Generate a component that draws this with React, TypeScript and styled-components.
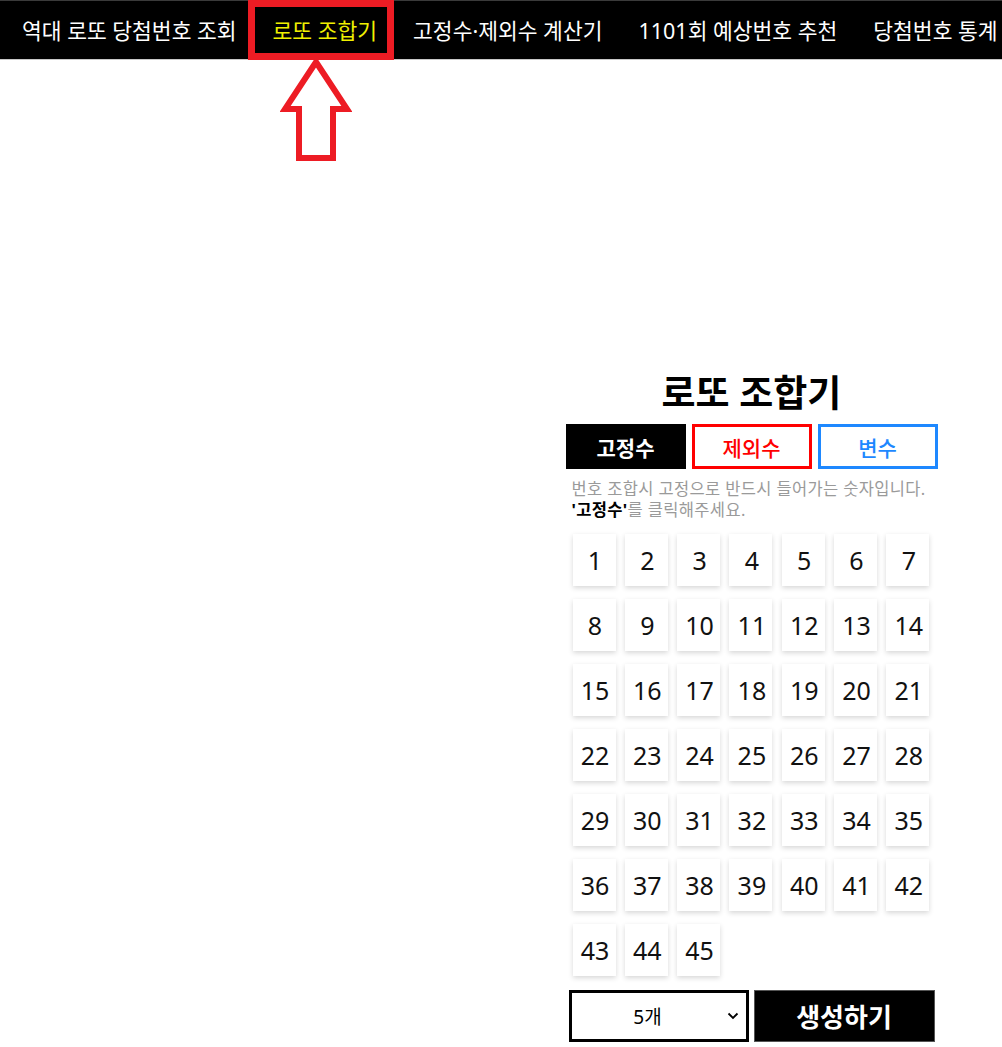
import React from "react";
import styled, { createGlobalStyle } from "styled-components";

const NAV_ITEMS = [
	"역대 로또 당첨번호 조회",
	"로또 조합기",
	"고정수·제외수 계산기",
	"1101회 예상번호 추천",
	"당첨번호 통계",
];

const NUMBERS = Array.from({ length: 45 }, (_, i) => i + 1);

type TabVariant = "fixed" | "exclude" | "variable";

const TAB_COLORS: Record<TabVariant, string> = {
	fixed: "#000000",
	exclude: "#ff0000",
	variable: "#1e88ff",
};

const GlobalStyle = createGlobalStyle`
	html, body {
		margin: 0;
		padding: 0;
		background: #ffffff;
	}
	body {
		font-family: "Noto Sans", "Noto Sans CJK KR", sans-serif;
		color: #000;
	}
	* {
		box-sizing: border-box;
	}
`;

const App = () => {
	return (
		<>
			<GlobalStyle />
			<NavBar>
				{NAV_ITEMS.map((item, i) => (
					<NavItem key={item} $active={i === 1}>
						{item}
						{i === 1 && (
							<PointerArrow width="72" height="102" viewBox="0 0 72 102">
								<path
									d="M36 3 L67 50 L53 50 L53 99 L19 99 L19 50 L5 50 Z"
									fill="none"
									stroke="#ed1c24"
									strokeWidth="6"
								/>
							</PointerArrow>
						)}
					</NavItem>
				))}
			</NavBar>
			<Page>
				<LeftColumn />
				<RightColumn>
					<Panel>
						<Title>로또 조합기</Title>
						<Tabs>
							<Tab $variant="fixed">고정수</Tab>
							<Tab $variant="exclude">제외수</Tab>
							<Tab $variant="variable">변수</Tab>
						</Tabs>
						<Description>
							번호 조합시 고정으로 반드시 들어가는 숫자입니다.
							<br />
							<b>'고정수'</b>를 클릭해주세요.
						</Description>
						<NumberGrid>
							{NUMBERS.map((n) => (
								<NumberCell key={n}>{n}</NumberCell>
							))}
						</NumberGrid>
						<Actions>
							<CountSelect>
								<span>5개</span>
								<Chevron width="12" height="8" viewBox="0 0 12 8">
									<path d="M1.5 1.5 L6 6 L10.5 1.5" fill="none" stroke="#000" strokeWidth="1.8" />
								</Chevron>
							</CountSelect>
							<GenerateButton>생성하기</GenerateButton>
						</Actions>
					</Panel>
				</RightColumn>
			</Page>
		</>
	);
};

const NavBar = styled.nav`
	height: 60px;
	background: #000;
	border-top: 1px solid #3a3a3a;
	border-bottom: 1px solid #c8c8c8;
	display: flex;
	align-items: stretch;
	padding-left: 22px;
	column-gap: 36px;
	white-space: nowrap;
`;

const NavItem = styled.a<{ $active?: boolean }>`
	position: relative;
	display: flex;
	align-items: center;
	padding-bottom: 2px;
	font-size: 21.5px;
	color: ${(p) => (p.$active ? "#f0f000" : "#ffffff")};
	cursor: pointer;

	/* red annotation box around the current menu */
	${(p) =>
		p.$active &&
		`
		&::after {
			content: "";
			position: absolute;
			left: -25px;
			right: -17px;
			top: -1px;
			bottom: -1px;
			border: 7px solid #ed1c24;
			pointer-events: none;
		}
	`}
`;

const PointerArrow = styled.svg`
	position: absolute;
	left: 7px;
	top: 58px;
`;

const Page = styled.main`
	display: flex;
	width: 100%;
`;

const LeftColumn = styled.div`
	flex: 1;
`;

const RightColumn = styled.div`
	flex: 1;
	display: flex;
	justify-content: center;
	padding-top: 308px;
`;

const Panel = styled.section`
	width: 372px;
	display: flex;
	flex-direction: column;
	align-items: stretch;
`;

const Title = styled.h1`
	margin: 0;
	font-size: 37px;
	font-weight: 700;
	line-height: 50px;
	text-align: center;
`;

const Tabs = styled.div`
	display: grid;
	grid-template-columns: repeat(3, 1fr);
	column-gap: 6px;
	margin-top: 6px;
`;

const Tab = styled.button<{ $variant: TabVariant }>`
	height: 45px;
	padding: 0;
	font-family: inherit;
	font-size: 21px;
	font-weight: ${(p) => (p.$variant === "fixed" ? 700 : 500)};
	cursor: pointer;
	background: ${(p) => (p.$variant === "fixed" ? "#000" : "#fff")};
	color: ${(p) => (p.$variant === "fixed" ? "#fff" : TAB_COLORS[p.$variant])};
	border: 3px solid ${(p) => TAB_COLORS[p.$variant]};
`;

const Description = styled.p`
	margin: 9px 0 0 6px;
	font-size: 16.5px;
	line-height: 21px;
	color: #9a9a9a;
	letter-spacing: 0.35px;

	b {
		color: #000;
		font-weight: 700;
	}
`;

const NumberGrid = styled.div`
	display: grid;
	grid-template-columns: repeat(7, 43px);
	grid-auto-rows: 52px;
	column-gap: 9.3px;
	row-gap: 13px;
	margin: 14px 0 0 7px;
`;

const NumberCell = styled.div`
	background: #fff;
	box-shadow: 0 2px 5px rgba(0, 0, 0, 0.16);
	display: flex;
	align-items: center;
	justify-content: center;
	padding-left: 2px;
	font-size: 25px;
	color: #111;
	cursor: pointer;
`;

const Actions = styled.div`
	display: grid;
	grid-template-columns: 180px 181px;
	column-gap: 5px;
	margin: 14px 0 0 3px;
`;

const CountSelect = styled.div`
	position: relative;
	height: 52px;
	border: 3px solid #000;
	display: flex;
	align-items: center;
	justify-content: center;
	padding-right: 22px;
	font-size: 19px;
`;

const Chevron = styled.svg`
	position: absolute;
	right: 7px;
	top: 19px;
`;

const GenerateButton = styled.button`
	height: 52px;
	background: #000;
	border: 1px solid #555;
	color: #fff;
	font-family: inherit;
	font-size: 26px;
	font-weight: 700;
	cursor: pointer;
`;

export default App;
